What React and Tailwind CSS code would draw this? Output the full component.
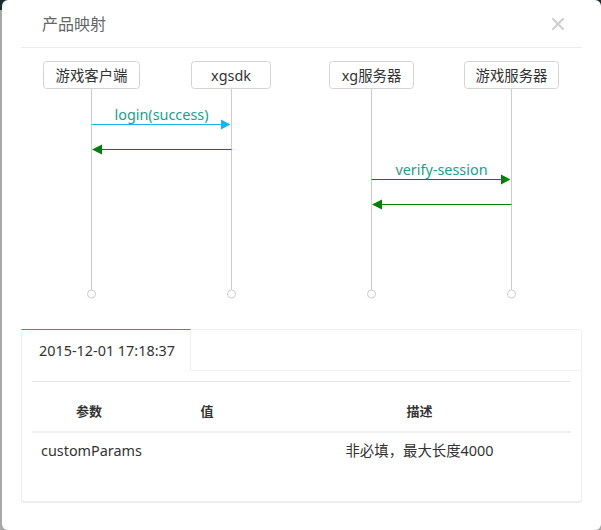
import React from "react";

const FONT = { fontFamily: '"Noto Sans", "Noto Sans CJK SC", sans-serif' };

function Diagram() {
  const boxes = [
    { x: 22, w: 96, label: "游戏客户端" },
    { x: 170, w: 79, label: "xgsdk" },
    { x: 308, w: 84, label: "xg服务器" },
    { x: 443, w: 94, label: "游戏服务器" },
  ];
  const lanes = [70, 210, 350, 490];
  const green = "#008000";
  const cyan = "#19b5e6";
  const labelColor = "#1aa08c";
  return (
    <svg width="559" height="281" className="block" style={FONT}>
      {lanes.map((x) => (
        <g key={x}>
          <line x1={x + 0.5} y1={41} x2={x + 0.5} y2={242} stroke="#cccccc" strokeWidth="1" />
          <circle cx={x + 0.5} cy={246} r={4} fill="#fff" stroke="#cccccc" strokeWidth="1" />
        </g>
      ))}
      {boxes.map((b) => (
        <g key={b.label}>
          <rect x={b.x + 0.5} y={13.5} width={b.w} height={27} rx={3} fill="#fff" stroke="#d4d4d4" />
          <text x={b.x + b.w / 2 + 0.5} y={32.5} textAnchor="middle" fontSize="14.4" fill="#333">
            {b.label}
          </text>
        </g>
      ))}
      {/* login(success) */}
      <text x={140.5} y={71.5} textAnchor="middle" fontSize="14.4" fill={labelColor}>login(success)</text>
      <line x1={70.5} y1={76.5} x2={202} y2={76.5} stroke={cyan} strokeWidth="1" />
      <polygon points="200,71.5 209.5,76.5 200,81.5" fill={cyan} />
      {/* return */}
      <line x1={80} y1={101.5} x2={210.5} y2={101.5} stroke={green} strokeWidth="1" />
      <polygon points="81,96.5 71,101.5 81,106.5" fill={green} />
      {/* verify-session */}
      <text x={420.5} y={126.5} textAnchor="middle" fontSize="14.4" fill={labelColor}>verify-session</text>
      <line x1={350.5} y1={131.5} x2={482} y2={131.5} stroke={green} strokeWidth="1" />
      <polygon points="480,126.5 489.5,131.5 480,136.5" fill={green} />
      <line x1={360} y1={156.5} x2={490.5} y2={156.5} stroke={green} strokeWidth="1" />
      <polygon points="361,151.5 351,156.5 361,161.5" fill={green} />
    </svg>
  );
}

export default function App() {
  return (
    <div
      className="w-[601px] h-[530px] flex bg-[linear-gradient(to_bottom,#1c2b30_0,#1c2b30_10px,#a8a8a8_10px)] overflow-hidden"
      style={FONT}
    >
      <div className="ml-[2px] flex-1 h-full bg-white rounded-[6px] px-[19px] flex flex-col">
        <div className="h-[48px] shrink-0 border-b border-[#ececec] flex items-center justify-between pl-[21px] pr-[18px]">
          <span className="text-[16px] text-[#666] leading-none">产品映射</span>
          <svg width="12" height="12" viewBox="0 0 12 12" className="block">
            <path d="M1 1 L11 11 M11 1 L1 11" stroke="#cfcfcf" strokeWidth="2.2" strokeLinecap="square" />
          </svg>
        </div>
        <Diagram />
        <div className="rounded-[3px] border border-[#f0f0f0] shadow-[0_1px_1px_rgba(0,0,0,0.08)] bg-white">
          <div className="flex border-b border-[#f2f2f2] -mt-px">
            <div className="-mb-px -ml-px w-[170px] h-[42px] border-t border-t-[#3c8dbc] border-l border-l-[#f0f0f0] border-r border-r-[#f0f0f0] bg-white flex items-center pl-[17px] text-[14.4px] text-[#333]">
              2015-12-01 17:18:37
            </div>
          </div>
          <div className="p-[10px]">
            <table className="w-full border-collapse mb-[22px] table-fixed">
              <thead>
                <tr className="border-t border-[#e3e3e3]">
                  <th className="w-[114px] pt-[19px] pb-[10px] leading-[20px] text-[13px] font-bold text-[#333] text-center border-b-2 border-[#efefef]">参数</th>
                  <th className="w-[122px] pt-[19px] pb-[10px] leading-[20px] text-[13px] font-bold text-[#333] text-center border-b-2 border-[#efefef]">值</th>
                  <th className="pt-[19px] pb-[10px] leading-[20px] text-[13px] font-bold text-[#333] text-center border-b-2 border-[#efefef]">描述</th>
                </tr>
              </thead>
              <tbody>
                <tr>
                  <td className="pl-[9px] py-[8px] leading-[20px] text-[14.4px] text-[#333] text-left">customParams</td>
                  <td className="py-[8px] leading-[20px] text-[14.4px] text-[#333]"></td>
                  <td className="py-[8px] leading-[20px] text-[14.4px] text-[#333] text-center">非必填，最大长度4000</td>
                </tr>
              </tbody>
            </table>
          </div>
        </div>
      </div>
    </div>
  );
}
